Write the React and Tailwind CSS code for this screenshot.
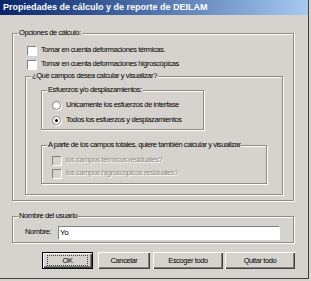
import React, { useState } from 'react';

const font = { fontFamily: '"Liberation Sans", Arial, sans-serif' };

function Group({ label, className, children }) {
  return (
    <div className={`relative border border-[#8e8b86] shadow-[1px_1px_0_#ffffff,inset_1px_1px_0_#ffffff] ${className}`}>
      <span className="absolute -top-[6px] left-[5px] whitespace-nowrap bg-[#d6d3ce] px-[1px] leading-[10px] text-black">
        {label}
      </span>
      {children}
    </div>
  );
}

function Check({ checked, disabled, onChange }) {
  return (
    <span
      onClick={disabled ? undefined : onChange}
      className={`flex h-[9px] w-[9px] shrink-0 items-center justify-center border-t border-l border-[#808080] shadow-[1px_1px_0_#ffffff] ${
        disabled ? 'bg-[#d6d3ce]' : 'bg-white'
      }`}
    >
      {checked && (
        <svg width="7" height="7" viewBox="0 0 7 7">
          <path d="M1 3 L3 5 L6 1" stroke="black" strokeWidth="1.4" fill="none" />
        </svg>
      )}
    </span>
  );
}

function Radio({ checked, onChange }) {
  return (
    <span
      onClick={onChange}
      className="flex h-[9px] w-[9px] shrink-0 items-center justify-center rounded-full border border-[#808080] bg-white shadow-[1px_1px_0_#ffffff]"
    >
      {checked && <span className="h-[3px] w-[3px] rounded-full bg-black" />}
    </span>
  );
}

function Button({ children, isDefault, className }) {
  return (
    <button
      className={`flex h-[17px] items-center justify-center bg-[#d6d3ce] text-black ${
        isDefault
          ? 'border border-black shadow-[inset_1px_1px_0_#ffffff,inset_-1px_-1px_0_#404040,inset_-2px_-2px_0_#808080]'
          : 'shadow-[inset_1px_1px_0_#ffffff,inset_-1px_-1px_0_#404040,inset_-2px_-2px_0_#808080]'
      } ${className}`}
    >
      {isDefault ? (
        <span className="flex h-[11px] w-[41px] items-center justify-center border border-dotted border-[#404040]">
          {children}
        </span>
      ) : (
        children
      )}
    </button>
  );
}

export default function App() {
  const [termicas, setTermicas] = useState(false);
  const [higro, setHigro] = useState(false);
  const [modo, setModo] = useState('todos');
  const [nombre, setNombre] = useState('Yo');

  return (
    <div
      className="h-[281px] w-[311px] overflow-hidden whitespace-nowrap bg-[#d6d3ce] text-[7.5px] tracking-[-0.4px]"
      style={font}
    >
      <div className="h-[279px] w-[309px] border-r border-b border-[#404040]">
        <div className="flex h-[15px] items-center bg-gradient-to-r from-[#0a246a] to-[#a6caf0] pl-[3px] text-[9px] font-bold tracking-normal text-white">
          Propiedades de cálculo y de reporte de DEILAM
        </div>

        <Group label="Opciones de cálculo:" className="mt-[18px] ml-[12px] h-[168px] w-[282px]">
          <div className="mt-[9px] flex h-[14px] items-center gap-[5px] pl-[14px]">
            <Check checked={termicas} onChange={() => setTermicas(!termicas)} />
            <span>Tomar en cuenta deformaciones térmicas.</span>
          </div>
          <div className="flex h-[14px] items-center gap-[5px] pl-[14px]">
            <Check checked={higro} onChange={() => setHigro(!higro)} />
            <span>Tomar en cuenta deformaciones higroscópicas</span>
          </div>

          <Group label="¿Qué campos desea calcular y visualizar?" className="mt-[5px] ml-[12px] h-[119px] w-[258px]">
            <Group label="Esfuerzos y/o desplazamientos:" className="mt-[13px] ml-[15px] h-[40px] w-[163px]">
              <div className="mt-[7px] flex h-[14px] items-center gap-[5px] pl-[10px]">
                <Radio checked={modo === 'interfase'} onChange={() => setModo('interfase')} />
                <span>Unicamente los esfuerzos de interfase</span>
              </div>
              <div className="mt-[1px] flex h-[14px] items-center gap-[5px] pl-[10px]">
                <Radio checked={modo === 'todos'} onChange={() => setModo('todos')} />
                <span>Todos los esfuerzos y desplazamientos</span>
              </div>
            </Group>

            <Group
              label="A parte de los campos totales, quiere también calcular y visualizar"
              className="mt-[15px] ml-[15px] h-[39px] w-[226px]"
            >
              <div className="mt-[8px] flex h-[12px] items-center gap-[5px] pl-[10px]">
                <Check disabled />
                <span className="text-[#8e8b86] [text-shadow:1px_1px_0_#ffffff]">los campos térmicos residuales?</span>
              </div>
              <div className="mt-[1px] flex h-[12px] items-center gap-[5px] pl-[10px]">
                <Check disabled />
                <span className="text-[#8e8b86] [text-shadow:1px_1px_0_#ffffff]">los campos higroscópicos residuales?</span>
              </div>
            </Group>
          </Group>
        </Group>

        <Group label="Nombre del usuario" className="mt-[15px] ml-[12px] h-[27px] w-[282px]">
          <div className="mt-[8px] flex h-[14px] items-center pl-[12px]">
            <span className="w-[33px]">Nombre:</span>
            <input
              value={nombre}
              onChange={(e) => setNombre(e.target.value)}
              className="h-[13px] w-[221px] border-t border-l border-[#808080] bg-white px-[1px] text-[8px] text-black shadow-[1px_1px_0_#ffffff] outline-none"
              style={font}
            />
          </div>
        </Group>

        <div className="mt-[9px] flex">
          <Button isDefault className="ml-[42px] w-[51px]">OK</Button>
          <Button className="ml-[5px] w-[52px]">Cancelar</Button>
          <Button className="ml-[3px] w-[70px]">Escoger todo</Button>
          <Button className="ml-[2px] w-[70px]">Quitar todo</Button>
        </div>
      </div>
    </div>
  );
}
